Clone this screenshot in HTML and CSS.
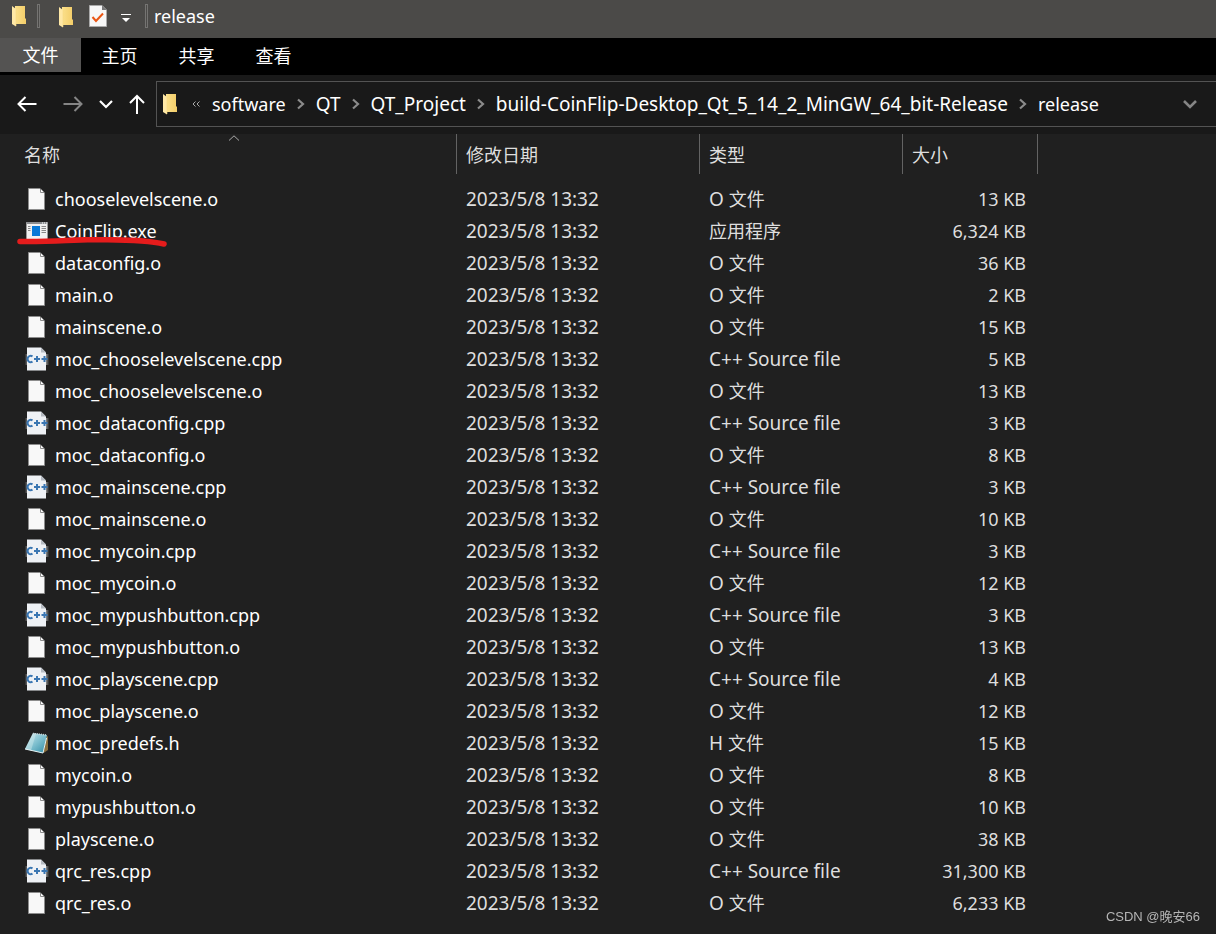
FILE: index.html
```html
<!DOCTYPE html>
<html lang="zh-CN">
<head>
<meta charset="utf-8">
<title>release</title>
<link rel="stylesheet" href="styles.css">
</head>
<body>
<svg class="defs" aria-hidden="true">
  <defs>
    <linearGradient id="gold" x1="0" x2="1" y1="0" y2="0"><stop offset="0" stop-color="#fbe08c"/><stop offset="1" stop-color="#f3cd68"/></linearGradient>
    <linearGradient id="note" x1="0" x2="1" y1="0" y2="1"><stop offset="0" stop-color="#d5eef3"/><stop offset=".5" stop-color="#7fc0cf"/><stop offset="1" stop-color="#2f8ba5"/></linearGradient>
    <linearGradient id="edge" x1="0" x2="1" y1="0" y2="0"><stop offset="0" stop-color="#8a8a8a" stop-opacity=".1"/><stop offset=".15" stop-color="#aaa"/><stop offset=".85" stop-color="#aaa"/><stop offset="1" stop-color="#8a8a8a" stop-opacity=".1"/></linearGradient>
    <symbol id="folder" viewBox="0 0 16 22"><path d="M4 1H14V13L15 14V19H4Z" fill="url(#gold)"/><path d="M1 1L5 4V21.500L1 19Z" fill="#ffe8a6"/><path d="M5 4V21" stroke="#f6d780" stroke-width=".6"/></symbol>
    <symbol id="page" viewBox="0 0 24 24"><path d="M3.500 1.500H15L19.500 6V22.500H3.500Z" fill="#f8f8f8" stroke="#8c8c8c"/><path d="M15.500 2V5.500H19" fill="#fff" stroke="#8c8c8c"/></symbol>
    <symbol id="cpp" viewBox="0 0 24 24"><path d="M0 7H24V18H0Z" fill="url(#edge)"/><path d="M2 .5H16L21 5.500V23.500H2Z" fill="#eef1f5"/><path d="M16 .5V5.500H21Z" fill="#b6bbc2"/><path d="M7.500 9.300A3.200 3.200 0 1 0 7.500 14.700M9 12H15M12 9V15M16.500 12H22.500M19.500 9V15" fill="none" stroke="#3a76b2" stroke-width="2"/></symbol>
    <symbol id="app" viewBox="0 0 24 24"><path d="M1 3H23V21H1Z" fill="#f1f1f1"/><path d="M1 3H23V5H1Z" fill="#8b8d90"/><path d="M17 4H18M19 4H20M21 4H22" stroke="#fff"/><path d="M1.500 4V21M22.500 4V21" stroke="#9a9a9a"/><path d="M7 7H15V17H7Z" fill="#0879d8"/><path d="M3 7.500H5.500M3 9.500H5.500M3 11.500H5.500M16.500 7.500H21M16.500 9.500H21M16.500 11.500H21M16.500 13.500H21" stroke="#888"/></symbol>
    <symbol id="pad" viewBox="0 0 24 24"><path d="M21.500 4L23 6V19L18.500 22Z" fill="#8c6f3d"/><path d="M8 2L0 18L18 22L22 4Z" fill="url(#note)"/><path d="M8 2L0 18L6 19.500L11 3Z" fill="#dceff1" opacity=".4"/><path d="M0 18L18 22L21.500 7" fill="none" stroke="#e8f5f7"/><path d="M8 2.500L22 4" stroke="#c8d4d6" stroke-width="1.500" stroke-dasharray="1 1"/></symbol>
    <symbol id="sep" viewBox="0 0 10 12"><path d="M2 1.500L7 6L2 10.500" fill="none" stroke="#8b8b8b" stroke-width="2.200"/></symbol>
  </defs>
</svg>

<header class="titlebar">
  <svg class="folder"><use href="#folder"/></svg>
  <span class="divider"></span>
  <button class="quick quick-folder" aria-label="新建文件夹"><svg class="folder"><use href="#folder"/></svg></button>
  <button class="quick" aria-label="属性"><svg width="18" height="22" viewBox="0 0 18 22"><path d="M.5.500H13L17.500 5V21.500H.5Z" fill="#f7f7f7" stroke="#aaa"/><path d="M13 .5V5H17.500Z" fill="#777"/><path d="M3.500 12L7 16L14 8.500" fill="none" stroke="#ea5513" stroke-width="2"/></svg></button>
  <button class="quick quick-more" aria-label="自定义快速访问工具栏"><svg width="10" height="8" viewBox="0 0 10 8"><path d="M0 .5H10" stroke="#fff"/><path d="M1 4H9L5 8Z" fill="#fff"/></svg></button>
  <span class="divider"></span>
  <span class="title">release</span>
</header>

<nav class="tabs" aria-label="功能区">
  <button class="tab tab-file">文件</button>
  <button class="tab">主页</button>
  <button class="tab">共享</button>
  <button class="tab">查看</button>
</nav>

<div class="navbar">
  <div class="arrows">
    <button aria-label="后退"><svg width="20" height="16" viewBox="0 0 20 16"><path d="M1 8H19.500M8.500 1L1.500 8L8.500 15" fill="none" stroke="#fff" stroke-width="2"/></svg></button>
    <button aria-label="前进"><svg width="20" height="16" viewBox="0 0 20 16"><path d="M.5 8H19M11.500 1L18.500 8L11.500 15" fill="none" stroke="#858585" stroke-width="2"/></svg></button>
    <button aria-label="最近浏览的位置"><svg width="14" height="9" viewBox="0 0 14 9"><path d="M1 1L7 7L13 1" fill="none" stroke="#fff" stroke-width="2.200"/></svg></button>
    <button aria-label="上移"><svg width="16" height="20" viewBox="0 0 16 20"><path d="M8 2V20M1 9L8 2L15 9" fill="none" stroke="#fff" stroke-width="2"/></svg></button>
  </div>
  <div class="address">
    <svg class="folder"><use href="#folder"/></svg>
    <button class="overflow" aria-label="更多位置"><svg width="8" height="6" viewBox="0 0 8 6"><path d="M3.500 .5L1 3L3.500 5.500M7.500 .5L5 3L7.500 5.500" fill="none" stroke="#aaa"/></svg></button>
    <a class="word" href="#">software</a><svg class="sep"><use href="#sep"/></svg>
    <a href="#">QT</a><svg class="sep"><use href="#sep"/></svg>
    <a href="#">QT_Project</a><svg class="sep"><use href="#sep"/></svg>
    <a href="#">build-CoinFlip-Desktop_Qt_5_14_2_MinGW_64_bit-Release</a><svg class="sep"><use href="#sep"/></svg>
    <a class="word" href="#">release</a>
    <button class="history" aria-label="以前的位置"><svg width="14" height="9" viewBox="0 0 14 9"><path d="M1 1L7 7L13 1" fill="none" stroke="#858585" stroke-width="2.600"/></svg></button>
  </div>
</div>

<main class="list">
  <table class="files">
    <colgroup><col class="col-name"><col class="col-date"><col class="col-type"><col class="col-size"><col></colgroup>
    <thead>
      <tr>
        <th><button>名称</button><svg class="sorted" width="12" height="6" viewBox="0 0 12 6"><path d="M1 5.500L6 .8L11 5.500" fill="none" stroke="#aaa"/></svg></th>
        <th><button>修改日期</button></th><th><button>类型</button></th><th><button>大小</button></th><td></td>
      </tr>
    </thead>
    <tbody id="rows"></tbody>
  </table>
</main>
<footer class="credit">CSDN @晚安66</footer>
<script src="files.js"></script>
</body>
</html>
```
FILE: styles.css
```css
* { box-sizing: border-box; }
body {
  margin: 0;
  min-height: 100vh;
  background: #202020;
  color: #fff;
  font: 19px/32px "Noto Sans", "Noto Sans CJK SC", sans-serif;
}
button {
  margin: 0;
  padding: 0;
  border: 0;
  background: none;
  color: inherit;
  font: inherit;
}
svg { display: block; flex: none; }
.defs { position: absolute; width: 0; height: 0; }
.folder { width: 16px; height: 22px; }

.titlebar {
  display: flex;
  align-items: center;
  height: 38px;
  padding: 0 0 6px 11px;
  background: #4b4a48;
}
.divider {
  width: 3px;
  height: 24px;
  margin-left: 10px;
  border: 1px solid #757472;
}
.quick { margin-left: 15px; }
.quick-folder { margin-left: 18px; padding-top: 2px; }
.quick-more { margin-left: 14px; padding-top: 4px; }
.titlebar .quick-more + .divider { margin-left: 14px; }
.title { margin-left: 6px; font-size: 18px; }

.tabs {
  display: flex;
  height: 37px;
  background: #000;
  font-size: 18px;
}
.tab { width: 77px; height: 36px; }
.tab-file { width: 81px; height: 34px; background: #545352; }

.navbar {
  display: flex;
  align-items: center;
  height: 59px;
  padding-bottom: 1px;
  background: #191919;
}
.arrows {
  display: flex;
  align-items: center;
  flex: none;
  gap: 16px;
  width: 156px;
  padding-left: 17px;
}
.arrows button:first-child { margin-right: 10px; }
.address {
  display: flex;
  align-items: center;
  flex: 1;
  min-width: 0;
  height: 46px;
  padding-left: 5px;
  border: 1px solid #535353;
  border-right: 0;
}
.address a {
  color: #fff;
  text-decoration: none;
  white-space: nowrap;
}
.address .word { font-size: 18px; }
.overflow { margin: 0 12px 0 14px; }
.sep { width: 10px; height: 12px; margin: 0 10px; }
.history { margin: 0 19px 0 auto; }

.list { overflow: hidden; }
.files {
  width: 100%;
  border-spacing: 0;
  table-layout: fixed;
}
.col-name { width: 457px; }
.col-date { width: 243px; }
.col-type { width: 203px; }
.col-size { width: 135px; }
.files th {
  position: relative;
  height: 40px;
  padding: 1px 9px 0;
  border-right: 1px solid #636363;
  color: #dedede;
  font-size: 18px;
  font-weight: 400;
  text-align: left;
}
.files th:first-child { padding-left: 24px; }
.sorted { position: absolute; top: 1px; left: 50%; }
.files tbody::before { content: ""; display: block; height: 9px; }
.files tbody td {
  height: 32px;
  padding: 0 9px;
  color: #dedede;
  white-space: nowrap;
}
.files .name {
  display: flex;
  align-items: center;
  position: relative;
  gap: 6px;
  padding-left: 25px;
  color: #fff;
  font-size: 18px;
}
.icon { width: 24px; height: 24px; }
.files .size { padding-right: 12px; font-size: 18px; text-align: right; }
.cjk { font-size: 18px; }
.mark { position: absolute; left: 17px; top: 22px; }

.credit {
  position: fixed;
  right: 16px;
  bottom: 7px;
  color: #b5b5b5;
  font: 13px/20px "Liberation Sans", "Noto Sans CJK SC", sans-serif;
}
```
FILE: files.js
```js
const files = [
  ["chooselevelscene.o", "13"],
  ["CoinFlip.exe", "6,324"],
  ["dataconfig.o", "36"],
  ["main.o", "2"],
  ["mainscene.o", "15"],
  ["moc_chooselevelscene.cpp", "5"],
  ["moc_chooselevelscene.o", "13"],
  ["moc_dataconfig.cpp", "3"],
  ["moc_dataconfig.o", "8"],
  ["moc_mainscene.cpp", "3"],
  ["moc_mainscene.o", "10"],
  ["moc_mycoin.cpp", "3"],
  ["moc_mycoin.o", "12"],
  ["moc_mypushbutton.cpp", "3"],
  ["moc_mypushbutton.o", "13"],
  ["moc_playscene.cpp", "4"],
  ["moc_playscene.o", "12"],
  ["moc_predefs.h", "15"],
  ["mycoin.o", "8"],
  ["mypushbutton.o", "10"],
  ["playscene.o", "38"],
  ["qrc_res.cpp", "31,300"],
  ["qrc_res.o", "6,233"]
];
const kinds = {
  o: ["page", 'O <span class="cjk">文件</span>'],
  h: ["pad", 'H <span class="cjk">文件</span>'],
  cpp: ["cpp", "C++ Source file"],
  exe: ["app", '<span class="cjk">应用程序</span>']
};
const mark = '<svg class="mark" width="152" height="10" viewBox="0 0 152 10"><path d="M3 4.500C34 5 50 3 76 2.500C99 3 126 2 147 7" fill="none" stroke="#e51c1c" stroke-width="5.500" stroke-linecap="round"/></svg>';
document.getElementById("rows").innerHTML = files.map(([name, size]) => {
  const ext = name.split(".").pop();
  const [icon, type] = kinds[ext];
  return `<tr><td class="name"><svg class="icon"><use href="#${icon}"/></svg><span>${name}</span>${ext === "exe" ? mark : ""}</td><td>2023/5/8 13:32</td><td>${type}</td><td class="size">${size} KB</td><td></td></tr>`;
}).join("");
```
